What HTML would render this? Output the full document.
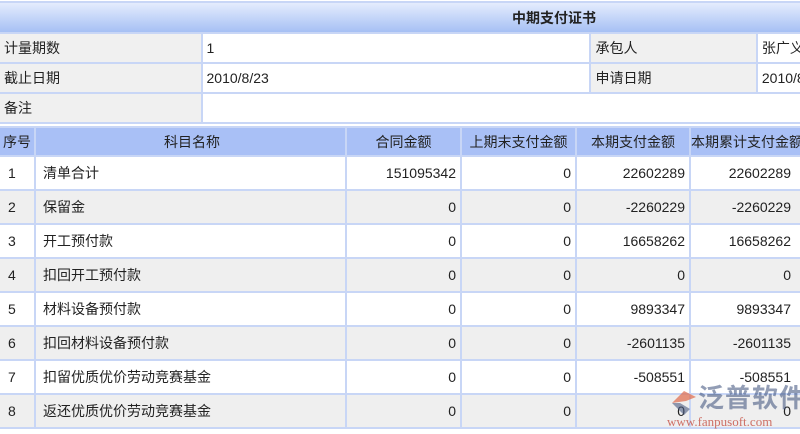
<!DOCTYPE html>
<html><head><meta charset="utf-8"><style>
body{margin:0;width:800px;height:434px;overflow:hidden;background:#fff;font-family:"Liberation Sans","Noto Sans CJK SC",sans-serif;font-size:14px;color:#222}
table{border-collapse:separate;border-spacing:2px;background:#c8d6f6;table-layout:fixed;position:absolute;left:-2px}
td{padding:0 4px;white-space:nowrap;overflow:hidden}
.t1{top:1px;width:806px}
.t1 td{height:28px}
.title{background:linear-gradient(#e4ecfd,#a6c0f4);text-align:center;font-weight:bold;font-size:14px;padding-left:310px}
.l{background:#f0f0f0}
.v{background:#fff}
.t2{top:126px;width:806px}
.t2 td{height:32px}
.t2 tr.h td{height:27px;background:#a9c0f6;text-align:center}
.t2 tr:nth-child(odd) td{background:#efefef}
.t2 tr:nth-child(even) td{background:#fff}
.t2 tr.h td{background:#a9c0f6}
.t2 td:first-child{padding-left:8px}
.t2 td:nth-child(2){padding-left:7px}
.r{text-align:right}
.t2 td.rr{padding-right:13px;text-align:right}
.wm{position:absolute;left:698px;top:378px;font-size:26px;color:#3a4e7a;opacity:.55;font-weight:bold;letter-spacing:1px;white-space:nowrap}
.wm2{position:absolute;left:667px;top:414px;font-size:13px;color:#c0392b;opacity:.7;font-family:"Liberation Serif",serif;white-space:nowrap}
</style></head><body>
<table class="t1">
<col style="width:200px"><col style="width:386px"><col style="width:164px"><col style="width:44px">
<tr><td colspan="4" class="title" style="height:29px">中期支付证书</td></tr>
<tr><td class="l">计量期数</td><td class="v">1</td><td class="l">承包人</td><td class="v">张广义</td></tr>
<tr><td class="l">截止日期</td><td class="v">2010/8/23</td><td class="l">申请日期</td><td class="v">2010/8</td></tr>
<tr><td class="l">备注</td><td class="v" colspan="3"></td></tr>
</table>
<table class="t2">
<col style="width:34px"><col style="width:309px"><col style="width:113px"><col style="width:113px"><col style="width:112px"><col style="width:113px">
<tr class="h"><td style="padding:0 2px">序号</td><td>科目名称</td><td>合同金额</td><td>上期末支付金额</td><td>本期支付金额</td><td style="padding:0;text-align:left">本期累计支付金额</td></tr>
<tr><td>1</td><td>清单合计</td><td class="r">151095342</td><td class="r">0</td><td class="r">22602289</td><td class="rr">22602289</td></tr>
<tr><td>2</td><td>保留金</td><td class="r">0</td><td class="r">0</td><td class="r">-2260229</td><td class="rr">-2260229</td></tr>
<tr><td>3</td><td>开工预付款</td><td class="r">0</td><td class="r">0</td><td class="r">16658262</td><td class="rr">16658262</td></tr>
<tr><td>4</td><td>扣回开工预付款</td><td class="r">0</td><td class="r">0</td><td class="r">0</td><td class="rr">0</td></tr>
<tr><td>5</td><td>材料设备预付款</td><td class="r">0</td><td class="r">0</td><td class="r">9893347</td><td class="rr">9893347</td></tr>
<tr><td>6</td><td>扣回材料设备预付款</td><td class="r">0</td><td class="r">0</td><td class="r">-2601135</td><td class="rr">-2601135</td></tr>
<tr><td>7</td><td>扣留优质优价劳动竞赛基金</td><td class="r">0</td><td class="r">0</td><td class="r">-508551</td><td class="rr">-508551</td></tr>
<tr><td>8</td><td>返还优质优价劳动竞赛基金</td><td class="r">0</td><td class="r">0</td><td class="r">0</td><td class="rr">0</td></tr>
</table>
<svg style="position:absolute;left:668px;top:389px" width="30" height="28"><path d="M4 14 L16 2 L28 8 L18 12 Z" fill="#e06a4a" opacity=".7"/><path d="M4 14 L16 26 L22 20 L12 14 Z" fill="#4a5a80" opacity=".6"/></svg>
<div class="wm">泛普软件</div>
<div class="wm2">www.fanpusoft.com</div>
</body></html>
